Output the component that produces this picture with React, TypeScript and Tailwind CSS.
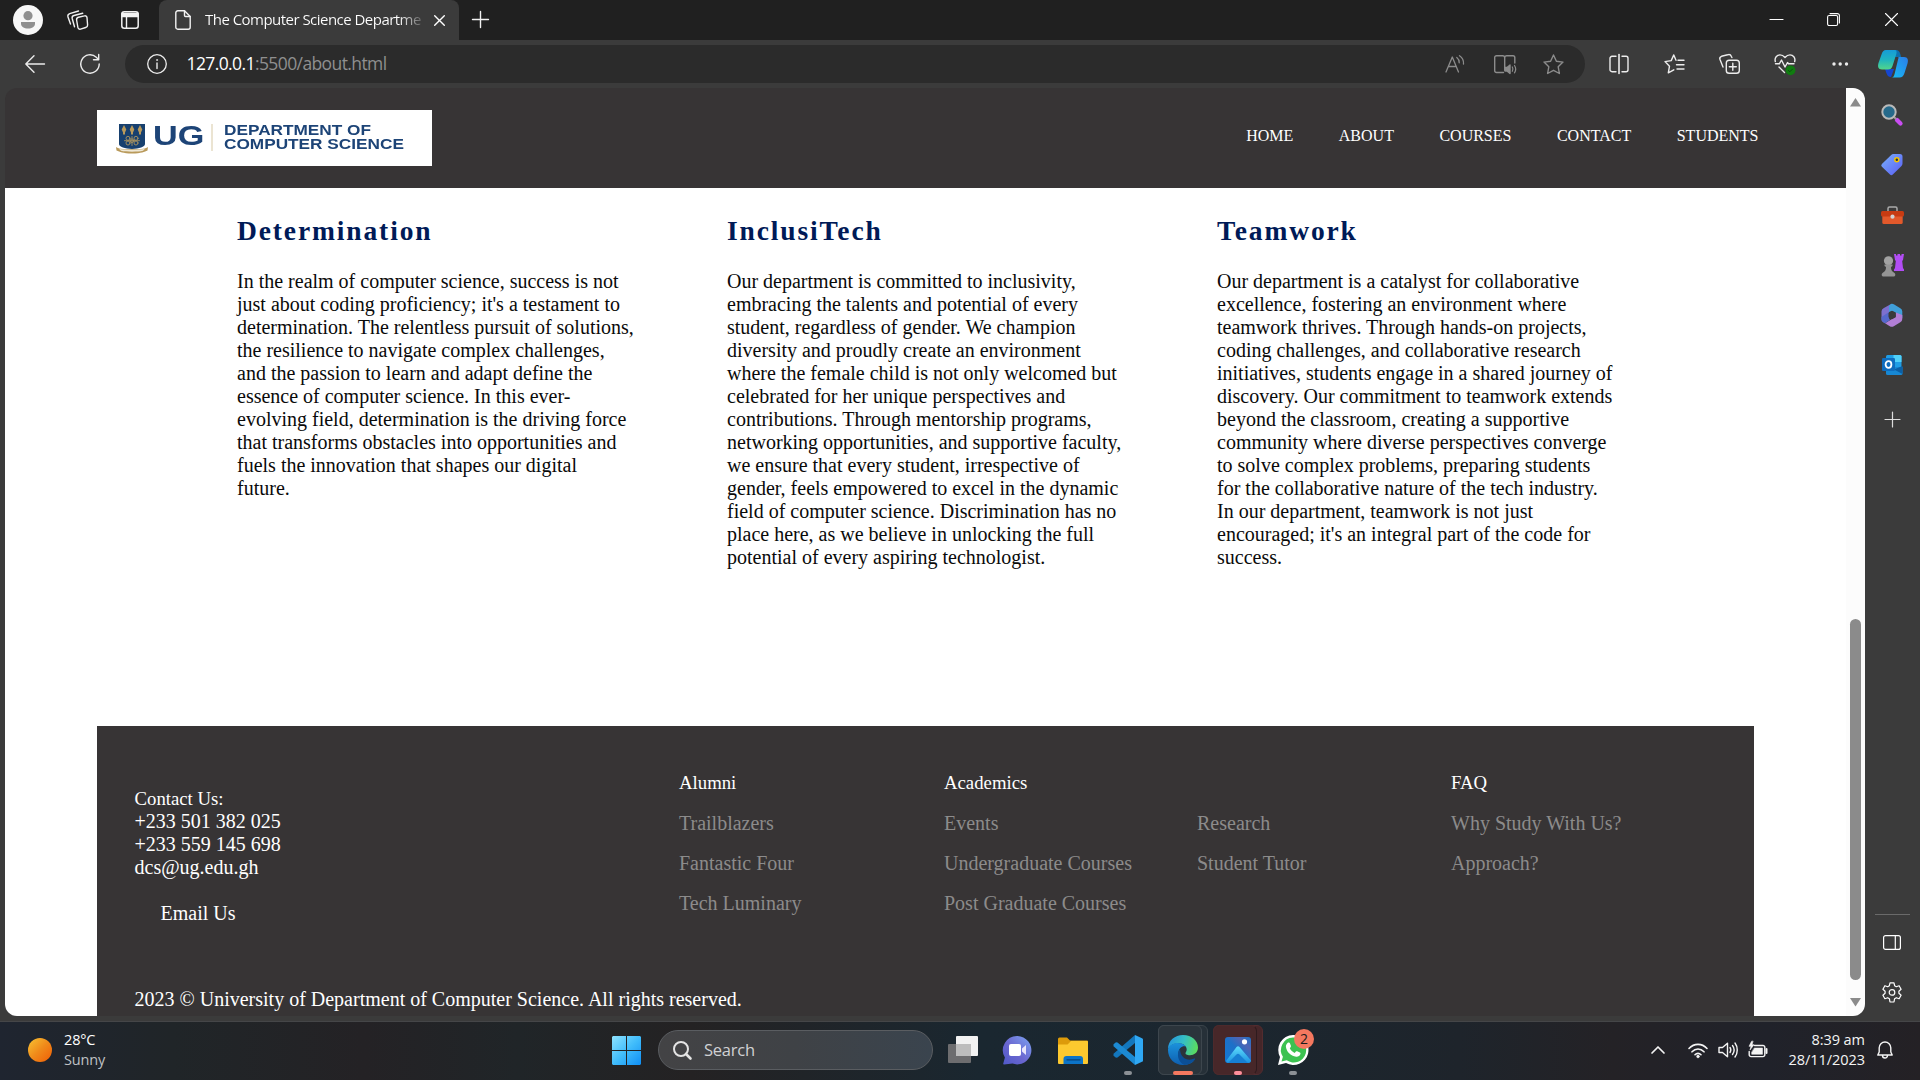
import React from 'react';

type SvgProps = { w: number; h: number; vb?: string; className?: string; children: React.ReactNode };

function Svg({ w, h, vb, className, children }: SvgProps) {
  return (
    <svg
      width={w}
      height={h}
      viewBox={vb ?? `0 0 ${w} ${h}`}
      fill="none"
      stroke="currentColor"
      strokeWidth="1.4"
      strokeLinecap="round"
      strokeLinejoin="round"
      className={`shrink-0 overflow-visible ${className ?? ''}`}
    >
      {children}
    </svg>
  );
}

/* ---------- window frame ---------- */

function TabStrip() {
  return (
    <div className="flex h-10 shrink-0 bg-[#202020] text-[#f2f2f2]">
      <div className="flex w-[159px] items-center rounded-br-md pl-[13px]">
        <Svg w={30} h={30} className="stroke-none">
          <circle cx="15" cy="15" r="15" fill="#f7f7f7" />
          <circle cx="15" cy="10.7" r="4.6" fill="#8f8f8f" />
          <path d="M8 17h14v1.5c0 3.300-3 5-7 5s-7-1.700-7-5z" fill="#8f8f8f" />
        </Svg>
        <Svg w={21} h={20} className="ml-6">
          <path d="M11.500 7.200 17.500 5.900a2 2 0 0 1 2.500 1.600L20.600 15a2.500 2.500 0 0 1-1.900 2.500l-5.200 1.600a2 2 0 0 1-2.600-1.600L9.600 10a2.500 2.500 0 0 1 1.900-2.800z" />
          <path d="M7.500 16.800 5.200 8.500a2.500 2.500 0 0 1 1.800-3l8.700-2.200" />
          <path d="M3.500 14 1 7a2.700 2.700 0 0 1 1.700-3.300L11.500 1" />
        </Svg>
        <Svg w={18} h={18} className="ml-[33px]">
          <rect x="0.800" y="0.800" width="16.400" height="16.400" rx="2.500" strokeWidth="1.500" />
          <path d="M1 2.500h16v3H1z" fill="currentColor" />
          <path d="M5.500 6v11" />
        </Svg>
      </div>
      <div className="flex w-[300px] items-center rounded-t-lg bg-[#3b3b3b] pl-4">
        <Svg w={16} h={20}>
          <path d="M2.800.8h6.700l5.700 5.700v10.700a2 2 0 0 1-2 2H2.800a2 2 0 0 1-2-2V2.800a2 2 0 0 1 2-2z" />
          <path d="M9.500.8v4.700a1 1 0 0 0 1 1h4.700" />
        </Svg>
        <div className="-mt-px ml-[14px] w-[220px] whitespace-nowrap bg-[linear-gradient(to_right,#fff_88%,#4a4a4a)] bg-clip-text font-['Open_Sans',sans-serif] text-[15px] tracking-[-0.53px] text-transparent">
          The Computer Science Departme
        </div>
        <Svg w={11} h={11} className="ml-[9px] text-white">
          <path d="M.7.7l9.600 9.600M10.300.7.7 10.300" />
        </Svg>
      </div>
      <div className="flex flex-1 items-center pl-[13px]">
        <Svg w={17} h={17} className="-mt-px">
          <path d="M8.500.5v16M.5 8.500h16" />
        </Svg>
      </div>
      <div className="flex w-[172px] pb-[1px] text-white">
        <div className="grid w-[57px] place-items-center">
          <Svg w={13} h={13}><path d="M0 6.500h13" strokeWidth="1.200" /></Svg>
        </div>
        <div className="grid w-[57px] place-items-center">
          <Svg w={13} h={13}>
            <rect x=".6" y="2.500" width="10" height="10" rx="1.500" strokeWidth="1.100" />
            <path d="M3 .6h7.400a2 2 0 0 1 2 2V10" strokeWidth="1.100" />
          </Svg>
        </div>
        <div className="grid w-[58px] place-items-center">
          <Svg w={13} h={13}><path d="M.5.5l12 12M12.500.5l-12 12" strokeWidth="1.100" /></Svg>
        </div>
      </div>
    </div>
  );
}

const starPath = 'M10.500 1l2.900 6.200 6.600.9-4.800 4.700 1.200 6.700-5.900-3.200-5.900 3.200 1.200-6.700L1 8.100l6.600-.9z';

function Toolbar() {
  return (
    <div className="flex h-12 shrink-0 items-center bg-[#3b3b3b] text-[#ececec]">
      <Svg w={20} h={18} className="ml-[25px] -mt-px"><path d="M19.500 9H.8M9 .8.8 9 9 17.200" /></Svg>
      <Svg w={20} h={20} className="ml-[35px]">
        <path d="M19.200 10a9.200 9.200 0 1 1-2.900-6.700L18.500 5.500M18.700.5v5.200h-5.200" />
      </Svg>
      <div className="ml-[25px] flex h-[38px] w-[1460px] items-center rounded-full bg-[#2b2b2b]">
        <Svg w={20} h={20} className="ml-[22px]">
          <circle cx="10" cy="10" r="9.300" strokeWidth="1.300" />
          <path d="M10 9v5.500" />
          <circle cx="10" cy="6" r=".6" fill="currentColor" strokeWidth=".6" />
        </Svg>
        <div className="-mt-px ml-[19.500px] flex-1 whitespace-nowrap font-['Open_Sans',sans-serif] text-[17.500px] tracking-[-0.6px] text-[#8f8f8f]">
          <span className="text-white">127.0.0.1</span>:5500/about.html
        </div>
        <div className="mr-[7px] flex text-[#8c8c8c]">
          <div className="grid w-[50px] place-items-center">
            <Svg w={20} h={18}>
              <path d="M1 17 7.300 2 13.500 17M3.300 11.500h8M11.800 2.500c1.700 1.300 2.500 3 2.400 5.300M14.500.7c3 2 4.300 5 4 8.300" strokeWidth="1.300" />
            </Svg>
          </div>
          <div className="grid w-[49px] place-items-center">
            <Svg w={22} h={19}>
              <path d="M9.500 17.500H2.500a1.800 1.800 0 0 1-1.800-1.800V2.500A1.800 1.800 0 0 1 2.500.7h6.200a2 2 0 0 1 2 2v12.500M10.700 2.700a2 2 0 0 1 2-2H19a1.800 1.800 0 0 1 1.800 1.800v5.500" />
              <path d="M11 12.500h2l3-2.500v8.500l-3-2.500h-2z" fill="currentColor" />
              <path d="M18.300 12c.8 1.300.8 3 0 4.300M20.500 10.500c1.500 2.200 1.500 5 0 7.300" strokeWidth="1.200" />
            </Svg>
          </div>
          <div className="grid w-[49px] place-items-center">
            <Svg w={21} h={20}><path d={starPath} /></Svg>
          </div>
        </div>
      </div>
      <div className="ml-[7px] flex">
        <div className="grid w-[54px] place-items-center">
          <Svg w={20} h={20}>
            <path d="M10 .5v19" strokeWidth="1.600" />
            <path d="M7 2.300H3a2 2 0 0 0-2 2v11.400a2 2 0 0 0 2 2h4M13 2.300h4a2 2 0 0 1 2 2v11.400a2 2 0 0 1-2 2h-4" />
          </Svg>
        </div>
        <div className="grid w-[56px] place-items-center">
          <Svg w={21} h={20}>
            <path d="M12 6.300 9.800.9 7.200 6.600 1 7.600l4.500 4.600-1.200 6.600 5.500-3M14 6.300h6M12.500 10.700H20M13 15h7" />
          </Svg>
        </div>
        <div className="grid w-[55px] place-items-center">
          <Svg w={21} h={20}>
            <rect x="7.300" y="6.300" width="13" height="13" rx="2.800" />
            <path d="M13.800 9.300v7M10.300 12.800h7M4 13 1 5.500a2.500 2.500 0 0 1 1.500-3.200L8.700.8a3 3 0 0 1 3.700 1.700l.5 1" />
          </Svg>
        </div>
        <div className="grid w-[55px] place-items-center">
          <Svg w={22} h={21}>
            <path d="M1.300 7.500C.3 3.500 3 .9 6 .9c2 0 3.600 1 5 2.600C12.400 1.900 14 .9 16 .9c3 0 5.700 2.600 4.700 6.600M5 13l5.500 5.500M1.500 9.800h3.800L7.500 6l3.500 7 2.500-4.500 1 1.300H20" />
            <circle cx="16.500" cy="16.300" r="4.900" fill="#107c10" stroke="none" />
            <path d="M14.500 16.500l1.300 1.300 2.700-2.700" stroke="#0a4f0c" strokeWidth="1" />
          </Svg>
        </div>
        <div className="grid w-[55px] place-items-center">
          <Svg w={16} h={4} className="fill-current stroke-none">
            <circle cx="2" cy="2" r="1.700" /><circle cx="8.200" cy="2" r="1.700" /><circle cx="14.500" cy="2" r="1.700" />
          </Svg>
        </div>
        <div className="grid w-[51px] place-items-center">
          <Svg w={30} h={28} className="stroke-none">
            <defs>
              <linearGradient id="cpA" x1="0" y1="0" x2="0" y2="1"><stop stopColor="#169bd8" /><stop offset=".5" stopColor="#1fb4c0" /><stop offset="1" stopColor="#52d68a" /></linearGradient>
              <linearGradient id="cpB" x1="1" y1="0" x2="0" y2="1"><stop stopColor="#2b7ce8" /><stop offset="1" stopColor="#17bdf5" /></linearGradient>
            </defs>
            <path d="M14 0h4c3 0 4 2 5 7h-8z" fill="#0d6fae" />
            <path d="M7 19h9l-3 8c-3 0-4-2-5-5z" fill="#1546d0" />
            <path d="M8 0h8c3 0 3 2 2 5l-3.500 11c-.8 2.500-2 3.500-4.500 3.500H4c-4 0-4.500-3-3.500-6.500L3.500 4.500C4.500 1.500 5.500 0 8 0z" fill="url(#cpA)" />
            <path d="M20 7h6c4 0 4.500 3 3.500 6.500L26.500 23c-1 3-2.500 4.500-5 4.500h-8c2 0 2.500-1.500 3.200-4l3-12.500c.8-3 1.300-4 .3-4z" fill="url(#cpB)" />
          </Svg>
        </div>
      </div>
    </div>
  );
}

/* ---------- web page ---------- */

const values = [
  {
    title: 'Determination',
    text: "In the realm of computer science, success is not just about coding proficiency; it's a testament to determination. The relentless pursuit of solutions, the resilience to navigate complex challenges, and the passion to learn and adapt define the essence of computer science. In this ever-evolving field, determination is the driving force that transforms obstacles into opportunities and fuels the innovation that shapes our digital future.",
  },
  {
    title: 'InclusiTech',
    text: 'Our department is committed to inclusivity, embracing the talents and potential of every student, regardless of gender. We champion diversity and proudly create an environment where the female child is not only welcomed but celebrated for her unique perspectives and contributions. Through mentorship programs, networking opportunities, and supportive faculty, we ensure that every student, irrespective of gender, feels empowered to excel in the dynamic field of computer science. Discrimination has no place here, as we believe in unlocking the full potential of every aspiring technologist.',
  },
  {
    title: 'Teamwork',
    text: "Our department is a catalyst for collaborative excellence, fostering an environment where teamwork thrives. Through hands-on projects, coding challenges, and collaborative research initiatives, students engage in a shared journey of discovery. Our commitment to teamwork extends beyond the classroom, creating a supportive community where diverse perspectives converge to solve complex problems, preparing students for the collaborative nature of the tech industry. In our department, teamwork is not just encouraged; it's an integral part of the code for success.",
  },
];

function Logo() {
  return (
    <div className="flex h-14 w-[335px] items-start bg-white pl-[19px] pt-[14px] font-['Liberation_Sans',sans-serif] font-bold text-[#1d4477]">
      <Svg w={32} h={30} className="stroke-none">
        <path d="M3 0h26v20c0 3-6 4.500-13 5C9 24.500 3 23 3 20z" fill="#17406f" />
        <g fill="#b99a5b">
          <path d="M8 1l2.300 4.500L9 8.500v2H7v-2L5.700 5.500zM16 1l2.300 4.500L17 8.500v2h-2v-2l-1.300-3zM24 1l2.300 4.500L25 8.500v2h-2v-2l-1.300-3z" />
          <path d="M0 23c2 1.500 6 2.300 16 2.300S30 24.500 32 23l-.5 3.500c-3 1-6 3-15.500 3S4 27.500.5 26.500z" />
        </g>
        <path d="M3 24.800c5 1.500 21 1.500 26 0l-2 2c-5 1.200-17 1.200-22 0z" fill="#efe8d6" />
        <g stroke="#a9935f" strokeWidth=".9" fill="none">
          <circle cx="12" cy="14.300" r="2" /><circle cx="20" cy="14.300" r="2" />
          <circle cx="12" cy="19" r="2" /><circle cx="20" cy="19" r="2" />
          <circle cx="16" cy="16.700" r="1.800" />
          <path d="M8.500 16.700h15M16 12.500v9" />
        </g>
      </Svg>
      <div className="ml-[5px] w-[58px] whitespace-nowrap">
        <div className="origin-left scale-x-[1.200] text-[28.500px] leading-[22px]">UG</div>
      </div>
      <div className="h-[27px] w-[2px] bg-[#ebe4d2]" />
      <div className="-mt-px ml-[11px] origin-left scale-x-[1.230] whitespace-nowrap text-[14px] leading-[14px]">
        <div>DEPARTMENT OF</div>
        <div>COMPUTER SCIENCE</div>
      </div>
    </div>
  );
}

function FooterColumn({ title, links }: { title: string; links: string[] }) {
  return (
    <div className="whitespace-nowrap">
      <div className="h-[41px] text-[18.750px] leading-[23px] text-white">{title}</div>
      {links.map((l) => (
        <div key={l} className="h-10 text-[20px] leading-[23px] text-[#8c8b8b]">{l}</div>
      ))}
    </div>
  );
}

function Page() {
  return (
    <div className="flex h-[928px] w-[1860px] overflow-hidden rounded-xl">
      <div className="flex w-[1841px] flex-col font-['Liberation_Serif',serif]">
        <header className="flex h-[100px] shrink-0 items-start justify-between bg-[#373435] pl-[92px] pr-[87.500px] pt-[22px]">
          <Logo />
          <nav className="flex gap-[45.500px] pt-[17px] text-[16px] leading-[18px] text-white">
            <span>HOME</span><span>ABOUT</span><span>COURSES</span><span>CONTACT</span><span>STUDENTS</span>
          </nav>
        </header>
        <main className="flex h-[538px] shrink-0 gap-[92.500px] bg-white pl-[232px] pt-[27px]">
          {values.map((v) => (
            <section key={v.title} className="w-[397.500px]">
              <h2 className="text-[27.500px] font-bold leading-[31px] tracking-[1.875px] text-[#001a57]">{v.title}</h2>
              <p className="mt-[24px] text-[20px] leading-[23px] text-[#0a0a0a]">{v.text}</p>
            </section>
          ))}
        </main>
        <div className="shrink-0 bg-white pl-[92px]">
          <footer className="h-[290px] w-[1657px] bg-[#373435] pl-[37.500px] pt-[45px] text-[20px] leading-[23px] text-white">
            <div className="grid h-[217px] grid-cols-[544.500px_265px_253px_254px_auto]">
              <div className="pt-[16px]">
                <div className="text-[18.750px]">Contact Us:</div>
                <div>+233 501 382 025</div>
                <div>+233 559 145 698</div>
                <div>dcs@ug.edu.gh</div>
                <div className="pl-[26px] pt-[23px]">Email Us</div>
              </div>
              <FooterColumn title="Alumni" links={['Trailblazers', 'Fantastic Four', 'Tech Luminary']} />
              <FooterColumn title="Academics" links={['Events', 'Undergraduate Courses', 'Post Graduate Courses']} />
              <FooterColumn title="" links={['Research', 'Student Tutor']} />
              <FooterColumn title="FAQ" links={['Why Study With Us?', 'Approach?']} />
            </div>
            <div>2023 © University of Department of Computer Science. All rights reserved.</div>
          </footer>
        </div>
      </div>
      <div className="flex w-[19px] flex-col items-center bg-[#fcfcfc] pt-[10px]">
        <Svg w={11} h={9} className="fill-[#8b8b8b] stroke-none"><path d="M5.500 0 11 8.500H0z" /></Svg>
        <div className="mt-[512px] h-[361px] w-[11px] shrink-0 rounded-full bg-[#8b8b8b]" />
        <Svg w={11} h={9} className="mt-[18px] fill-[#8b8b8b] stroke-none"><path d="M5.500 8.500 11 0H0z" /></Svg>
      </div>
    </div>
  );
}

/* ---------- sidebar ---------- */

function Sidebar() {
  const cell = 'grid h-[50px] w-full place-items-center';
  return (
    <div className="flex w-[54px] flex-col items-center">
      <div className="h-[2px]" />
      <div className={cell}>
        <Svg w={22} h={22}>
          <path d="M16 16l3.500 3.500" stroke="#c94df2" strokeWidth="4.200" />
          <path d="M12.500 12.500l2 2" stroke="#999" strokeWidth="2" />
          <circle cx="8" cy="8" r="6.700" fill="#266a8b" stroke="#b9b9b9" strokeWidth="2" />
        </Svg>
      </div>
      <div className={cell}>
        <Svg w={22} h={22} className="stroke-none">
          <defs><linearGradient id="tag" x1="0" y1="0" x2="1" y2="1"><stop stopColor="#79b1fb" /><stop offset="1" stopColor="#5a5df5" /></linearGradient></defs>
          <path d="M12.500 0H19a2.500 2.500 0 0 1 2.500 2.500v7c0 1-.3 1.700-1 2.400l-8.700 8.600a2 2 0 0 1-2.800 0L.9 12.700a2 2 0 0 1 0-2.800L10.200.9A3 3 0 0 1 12.500 0z" fill="url(#tag)" />
          <circle cx="15.800" cy="5.700" r="2" fill="#223344" stroke="#f5c400" strokeWidth="1.500" />
        </Svg>
      </div>
      <div className={cell}>
        <Svg w={23} h={18} className="stroke-none">
          <path d="M7 5V2.500A1.500 1.500 0 0 1 8.500 1h6A1.500 1.500 0 0 1 16 2.500V5" stroke="#aaa" strokeWidth="1.500" fill="none" />
          <rect x="1.300" y="7" width="20.400" height="11" rx="1.500" fill="#e2592b" />
          <rect y="5" width="23" height="5.500" rx="1.500" fill="#c73b12" />
          <circle cx="11.500" cy="10.700" r="2.100" fill="#d2d2d2" />
        </Svg>
      </div>
      <div className={cell}>
        <Svg w={23} h={24} className="stroke-none">
          <path d="M13 1h2v1.500h1.500V1h2.500v1.500h1.500V1H23l-1 6-.8 1 .8 7 1 1.500v1.500H13v-1.500l1-1.500.8-7-.8-1z" fill="#b24df5" />
          <circle cx="7.500" cy="7.800" r="4.600" fill="#a2a2a2" />
          <path d="M3.500 11.500h8v1.500l-1.500 1c0 3 .8 4.500 3.500 6 1 .7 1.300 3-.3 3.500H1.800C.2 23 .5 20.700 1.500 20 4.200 18.500 5 17 5 14l-1.500-1z" fill="#949494" />
        </Svg>
      </div>
      <div className={cell}>
        <Svg w={22} h={22} className="stroke-none">
          <path d="M10 0 2.500 4.200A4 4 0 0 0 .5 7.500V15c0 1.500.6 2.500 1.800 3.200L4 19.300 8 13.500V8z" fill="#7d70cf" />
          <path d="M10 0c1-.4 1.800-.3 2.800.3l6.500 3.900a4 4 0 0 1 2 3.300V14l-6.500-3V8.500L11 6.800 8 8V2z" fill="#409fd9" />
          <path d="M21.300 11v4a4 4 0 0 1-2 3.300l-6.500 3.900a4 4 0 0 1-4 0L4 19.300l7-4.300 3.800-2.300V8.500z" fill="#b27fd6" />
          <path d="M.5 13v2c0 1.500.6 2.500 1.800 3.200L4 19.300 9 16l-1-1.800V8z" fill="#5568cc" />
          <path d="M11 7l3.700 2v4.200L11 15.300l-3.500-2V9z" fill="#3b3b3b" />
        </Svg>
      </div>
      <div className={cell}>
        <Svg w={21} h={20} className="stroke-none">
          <rect x="4" width="15.500" height="13" rx="1.500" fill="#1f9ee6" />
          <path d="M11.500 0H18a1.500 1.500 0 0 1 1.500 1.500V7h-8z" fill="#50d0f8" />
          <path d="M4 12h16.500v6.500A1.500 1.500 0 0 1 19 20H5.500A1.500 1.500 0 0 1 4 18.500z" fill="#1788d4" />
          <path d="M20.500 11v8L12 14.500z" fill="#0b5fa5" />
          <rect y="3" width="13" height="13" rx="1.300" fill="#0f6cbd" />
          <ellipse cx="6.500" cy="9.500" rx="2.900" ry="3.300" stroke="#fff" strokeWidth="1.800" fill="none" />
        </Svg>
      </div>
      <div className={`${cell} pt-[9px] text-[#dcdcdc]`}>
        <Svg w={15} h={15}><path d="M7.500 0v15M0 7.500h15" strokeWidth="1.200" /></Svg>
      </div>
      <div className="mt-auto h-px w-[35px] bg-[#6a6a6a]" />
      <Svg w={18} h={15} className="mt-[20px] text-white">
        <rect x=".6" y=".6" width="16.800" height="13.800" rx="2" strokeWidth="1.200" />
        <path d="M12.300 1v13" strokeWidth="1.200" />
      </Svg>
      <Svg w={22} h={22} className="mb-[17px] mt-[32px] text-white">
        <path d="M9 .8h4l.6 2.900 1.700 1 2.800-1 2 3.500-2.200 2v2l2.200 2-2 3.500-2.800-1-1.700 1-.6 3.300H9l-.6-3.300-1.700-1-2.800 1-2-3.500 2.200-2v-2l-2.200-2 2-3.500 2.800 1 1.700-1z" strokeWidth="1.200" />
        <circle cx="11" cy="10.400" r="2.800" strokeWidth="1.200" />
      </Svg>
    </div>
  );
}

/* ---------- taskbar ---------- */

function Taskbar() {
  const cell = 'relative flex w-[55px] items-center justify-center pb-[2px]';
  return (
    <div className="flex h-[59px] items-stretch border-t border-[#454648] bg-[linear-gradient(to_right,#1f2530,#202528_9%,#242225_19%,#202528_27%,#242223_36%,#1a2730_51%,#1b262f_64%,#1e242b_76%,#242226_84%,#20222a_92%,#242125)] font-['Open_Sans',sans-serif] text-white">
      <div className="flex w-[600px] items-center pl-[28px]">
        <div className="-mt-[3px] h-6 w-6 rounded-full bg-[linear-gradient(135deg,#f8c433,#f08a1a_50%,#ef5d06)]" />
        <div className="-mt-[2px] ml-3 text-[14.500px] leading-[20px] tracking-[-0.15px]">
          <div>28°C</div>
          <div className="text-[#bfc1c4]">Sunny</div>
        </div>
      </div>
      <div className="flex w-[53px] items-center justify-center pb-[2px]">
        <Svg w={29} h={29} className="stroke-none">
          <defs><linearGradient id="win" x1="0" y1="0" x2="29" y2="29" gradientUnits="userSpaceOnUse"><stop stopColor="#8fe3ff" /><stop offset=".5" stopColor="#41bdfb" /><stop offset="1" stopColor="#0f8ef5" /></linearGradient></defs>
          <path d="M1 0h13v14H0V1zM15 0h13l1 1v13H15zM0 15h14v14H1l-1-1zM15 15h14v13l-1 1H15z" fill="url(#win)" />
        </Svg>
      </div>
      <div className="mb-[10px] ml-[5px] mr-[2px] mt-[8px] flex h-10 w-[275px] items-center rounded-full border border-[#5a5d61] bg-[linear-gradient(to_right,#434345,#3f4246_50%,#3a444e)] pl-[14px]">
        <Svg w={19} h={19} className="text-[#e4e4e4]">
          <circle cx="8" cy="8" r="7" strokeWidth="2" /><path d="M13 13l4.500 4.500" strokeWidth="2.600" />
        </Svg>
        <span className="ml-[12px] mt-px text-[16.500px] tracking-[-0.250px] text-[#d0d1d3]">Search</span>
      </div>
      <div className={cell}>
        <Svg w={30} h={27} className="-mt-[2px] stroke-none">
          <rect y="8" width="23" height="19" rx="1" fill="#6d6d6f" />
          <rect x="8" width="22" height="20" rx="1" fill="#f2f2f2" />
          <rect x="8" y="8" width="15" height="12" fill="#bdbdbd" />
        </Svg>
      </div>
      <div className={cell}>
        <Svg w={29} h={29} className="stroke-none">
          <defs><linearGradient id="chat" x1="1" y1="0" x2="0" y2="1"><stop stopColor="#7da5f2" /><stop offset=".55" stopColor="#6a66d0" /><stop offset="1" stopColor="#5059c9" /></linearGradient></defs>
          <path d="M14.500 0a14.200 14.200 0 1 1-5 27.600L1 28.500c-.8 0-1-.8-.6-1.500l1.500-5.500A14.200 14.200 0 0 1 14.500 0z" fill="url(#chat)" />
          <rect x="6" y="8" width="12" height="12" rx="2" fill="#fff" />
          <path d="M19 12.500l4-3.500v10l-4-3.500z" fill="#e9e6fb" />
        </Svg>
      </div>
      <div className={cell}>
        <Svg w={30} h={27} className="stroke-none">
          <path d="M0 2a1.500 1.500 0 0 1 1.500-1.500H9L12 3.500h17A1 1 0 0 1 30 4.500V12H0z" fill="#dd9b0a" />
          <path d="M0 7.500h9.500L13 4h16a1 1 0 0 1 1 1v21a1 1 0 0 1-1 1H1a1 1 0 0 1-1-1z" fill="#fdc92f" />
          <path d="M5.500 22a3 3 0 0 1 3-3h13.500a3 3 0 0 1 3 3v5H5.500z" fill="#0c74c8" />
          <path d="M9 22.800h13" stroke="#07437c" strokeWidth="1.300" />
        </Svg>
      </div>
      <div className={cell}>
        <Svg w={30} h={30} className="stroke-none">
          <path d="M22 0v8L4.500 22.500l-1.500.3L.5 20.700v-2z" fill="#1377bd" />
          <path d="M22 30v-8L4.500 7.500 3 7.200.5 9.300v2z" fill="#1c8ad3" />
          <path d="M22 0l7 3.200a1.500 1.500 0 0 1 1 1.400v20.800a1.500 1.500 0 0 1-1 1.400L22 30z" fill="#2fa8f4" />
        </Svg>
        <i className="absolute bottom-[5px] h-1 w-2 rounded-full bg-[#8b9095]" />
      </div>
      <div className={cell}>
        <div className="absolute left-[3px] top-[3px] h-[50px] w-[50px] rounded-md border border-[#3a434a] bg-[#263038]" />
        <div className="absolute left-[3px] top-[3px] h-[50px] w-[44px] rounded-md border border-[#3d464d] bg-[#2b343b]" />
        <Svg w={30} h={30} className="relative stroke-none">
          <defs>
            <linearGradient id="edA" x1="0" y1=".3" x2="1" y2=".5"><stop stopColor="#2596df" /><stop offset=".5" stopColor="#35bfc4" /><stop offset="1" stopColor="#5bdc5e" /></linearGradient>
            <linearGradient id="edB" x1="0" y1="0" x2="0" y2="1"><stop stopColor="#1b92dc" /><stop offset="1" stopColor="#0e5fb0" /></linearGradient>
          </defs>
          <path d="M0 14C0 5.500 7 0 15 0c9 0 15 6 15 12.500 0 5-4 7.700-8 7.700-3.500 0-4.500-1.200-4.500-2 0-1 1.200-1.500 1.200-4 0-3-3.200-6-8.200-6C5 8.200 1.500 11 0 14z" fill="url(#edA)" />
          <path d="M0 14c1.500-3.500 5-6 9.500-6 4 0 7 1.500 8.300 3.500-3.300-1-7.300 1.500-7.300 6.500 0 6 5 9 9.500 9 2.500 0 5-.8 6.500-1.700C24 28.500 20 30 15 30 6.500 30 0 23.500 0 15z" fill="url(#edB)" />
          <path d="M12 14c-4 5-2 13 4.500 16 4-.2 7.700-2 10.500-5.500.5-.8 0-1.300-.8-.9-6 2.900-14-.1-14.200-9.600z" fill="#0b4f96" />
        </Svg>
        <i className="absolute bottom-[5px] h-1 w-5 rounded-full bg-[#f4785f]" />
      </div>
      <div className={cell}>
        <div className="absolute left-[3px] top-[3px] h-[50px] w-[50px] rounded-md border border-[#532c2f] bg-[#452629]" />
        <div className="absolute left-[3px] top-[3px] h-[50px] w-[44px] rounded-md border border-r-[#2e1b1e] border-[#4c2a2c] bg-[#472729]" />
        <Svg w={26} h={26} className="relative stroke-none">
          <defs>
            <linearGradient id="phA" x1="0" y1="1" x2="1" y2="0"><stop stopColor="#1378d4" /><stop offset=".5" stopColor="#1d70c8" /><stop offset=".75" stopColor="#5064b4" /><stop offset="1" stopColor="#1a73c9" /></linearGradient>
            <linearGradient id="phB" x1="0" y1="0" x2="0" y2="1"><stop stopColor="#5fdcfb" /><stop offset="1" stopColor="#1b91e2" /></linearGradient>
          </defs>
          <rect width="26" height="26" rx="3" fill="url(#phA)" />
          <path d="M1 24 11.500 10a2 2 0 0 1 3 0L26 23.500V23a3 3 0 0 1-3 3H3a3 3 0 0 1-2-2z" fill="url(#phB)" />
          <path d="M3 26 11.500 17.500a2 2 0 0 1 3 0L23 26z" fill="#177fd3" />
          <circle cx="19.500" cy="4.800" r="2.600" fill="#fff" />
        </Svg>
        <i className="absolute bottom-[5px] h-1 w-2 rounded-full bg-[#ff8f9b]" />
      </div>
      <div className={cell}>
        <Svg w={30} h={30} className="relative stroke-none">
          <path d="M15 0a15 15 0 1 1-7 28L0 30l2-8A15 15 0 0 1 15 0z" fill="#fff" />
          <path d="M15 2.500A12.500 12.500 0 1 1 8.700 25.300L3.500 26.600 4.900 21.700A12.500 12.500 0 0 1 15 2.500z" fill="#3cc251" />
          <path d="M9.800 7.800c.7-.6 1.700-.4 2 .3l1.100 2.700c.2.500 0 1-.3 1.400l-.8 1c1 2.200 2.700 3.700 4.900 4.700l1.200-1.300c.4-.4.800-.5 1.300-.3l2.700 1.300c.6.300.7.900.5 1.500-.6 1.900-2.400 3-4.300 2.700-5.500-.8-9.600-5-10.200-10-.1-1.600.8-3.200 1.900-4z" fill="#fff" />
        </Svg>
        <span className="absolute left-[29px] top-[7px] grid h-5 w-5 place-items-center rounded-full bg-[#f4785f] text-[14px] leading-none text-[#1c1c1c]">2</span>
        <i className="absolute bottom-[5px] h-1 w-2 rounded-full bg-[#8b9095]" />
      </div>
      <div className="flex flex-1 items-center justify-end pb-[2px] pr-[27px] text-[#f4f4f4]">
        <Svg w={14} h={8}><path d="M1 7l6-6 6 6" strokeWidth="1.700" /></Svg>
        <Svg w={20} h={15} className="ml-[23px]">
          <path d="M1 5.500c5-5.500 13-5.500 18 0M4 8.800c3.500-3.700 8.500-3.700 12 0M7 11.700c1.700-1.800 4.300-1.800 6 0" strokeWidth="1.600" />
          <circle cx="10" cy="13.500" r="1.400" fill="currentColor" strokeWidth=".4" />
        </Svg>
        <Svg w={20} h={16} className="ml-[10px]">
          <path d="M1 5.500h3.500L9.500 1.300v13.400L4.500 10.500H1zM12 5.500c1 1.500 1 3.500 0 5M14.500 3.500c2 2.700 2 6.300 0 9M17 1c3 4 3 10 0 14" />
        </Svg>
        <Svg w={20} h={16} className="ml-[10px]">
          <path d="M6.500 3.500H15A1.800 1.800 0 0 1 16.800 5.300v7.500A1.800 1.800 0 0 1 15 14.600H3a1.800 1.800 0 0 1-1.800-1.800V9.500" />
          <path d="M6.500 6H14.500v6.300H3.700V10.500z" fill="currentColor" strokeWidth=".5" />
          <path d="M18.500 7v4" strokeWidth="2" />
          <path d="M3.500-.5 1 4.300h2L2 8l4-5.300H4L5-.5z" fill="currentColor" strokeWidth=".6" />
        </Svg>
        <div className="ml-[20px] w-[77px] whitespace-nowrap text-right text-[14.500px] leading-[20px] tracking-[-0.05px]">
          <div>8:39 am</div>
          <div>28/11/2023</div>
        </div>
        <Svg w={16} h={18} className="ml-[12px]">
          <path d="M8 1a5.800 5.800 0 0 0-5.800 5.800V11L.8 14h14.400l-1.400-3V6.800A5.800 5.800 0 0 0 8 1zM5.500 14.500a2.500 2.500 0 0 0 5 0" />
        </Svg>
      </div>
    </div>
  );
}

export default function App() {
  return (
    <div className="flex h-[1080px] w-[1920px] flex-col overflow-hidden bg-[#3b3b3b]">
      <TabStrip />
      <Toolbar />
      <div className="flex h-[933px] shrink-0 pl-[5px]">
        <Page />
        <Sidebar />
      </div>
      <Taskbar />
    </div>
  );
}
